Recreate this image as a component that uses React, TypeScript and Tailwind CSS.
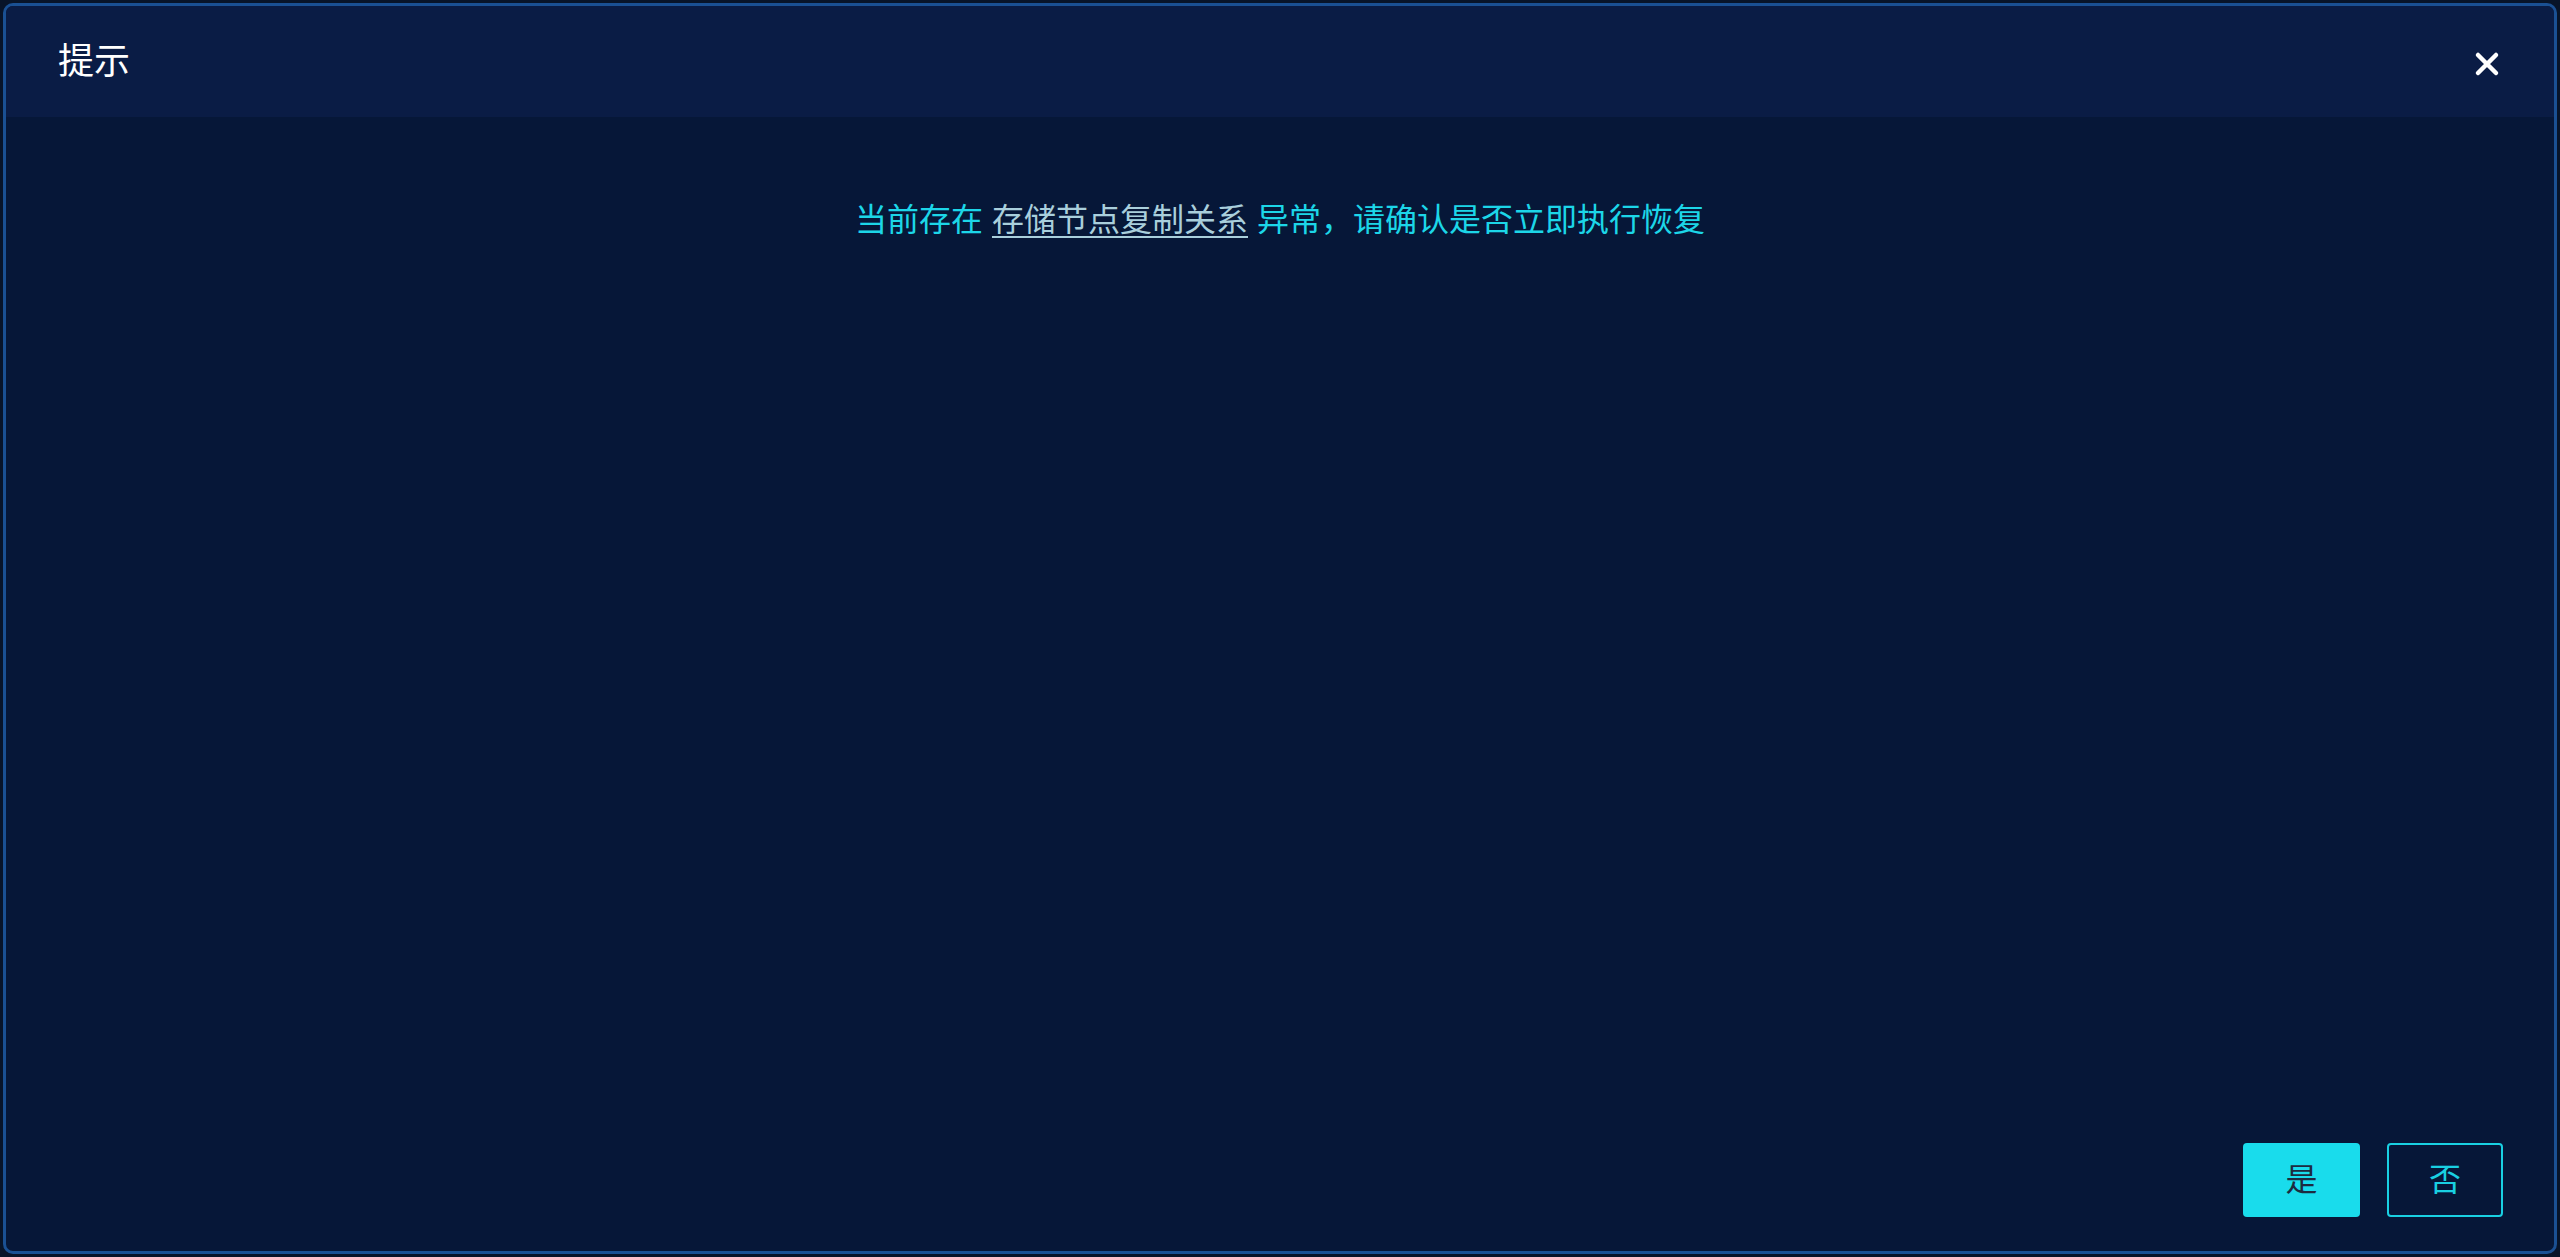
import React from 'react';

const FONT = "font-['Liberation_Sans','Noto_Sans_CJK_SC',sans-serif]";

const CloseIcon: React.FC = () => (
  <svg width="26" height="26" viewBox="0 0 26 26" fill="none">
    <path d="M4 4L22 22M22 4L4 22" stroke="#ffffff" strokeWidth="4.5" strokeLinecap="round" />
  </svg>
);

const App: React.FC = () => {
  return (
    <div className={`w-full h-screen bg-[#081429] p-[3px] ${FONT}`}>
      <div className="h-full flex flex-col rounded-[10px] border-[3px] border-[#1a5093] bg-[#061738] overflow-hidden">
        {/* Header */}
        <div className="h-[111px] shrink-0 bg-[#0a1c45] flex items-center justify-between pl-[52px] pr-[54px]">
          <span className="text-[36px] text-white leading-none">提示</span>
          <button className="w-[26px] h-[26px] mt-[4px] flex items-center justify-center">
            <CloseIcon />
          </button>
        </div>

        {/* Body */}
        <div className="flex-1 flex flex-col">
          <div className="pt-[83px] text-center text-[32px] leading-[40px] text-[#1cd6e8]">
            当前存在 <span className="underline underline-offset-[5px] decoration-2 text-[#a9cfdc]">存储节点复制关系</span> 异常，请确认是否立即执行恢复
          </div>
        </div>

        {/* Footer */}
        <div className="shrink-0 flex justify-end gap-[27px] pr-[51px] pb-[34px]">
          <button className="w-[117px] h-[74px] rounded-[4px] bg-[#19dcec] text-[#1d2b40] text-[32px]">是</button>
          <button className="w-[116px] h-[74px] rounded-[4px] border-2 border-[#19d0e2] text-[#19d0e2] text-[32px]">否</button>
        </div>
      </div>
    </div>
  );
};

export default App;
